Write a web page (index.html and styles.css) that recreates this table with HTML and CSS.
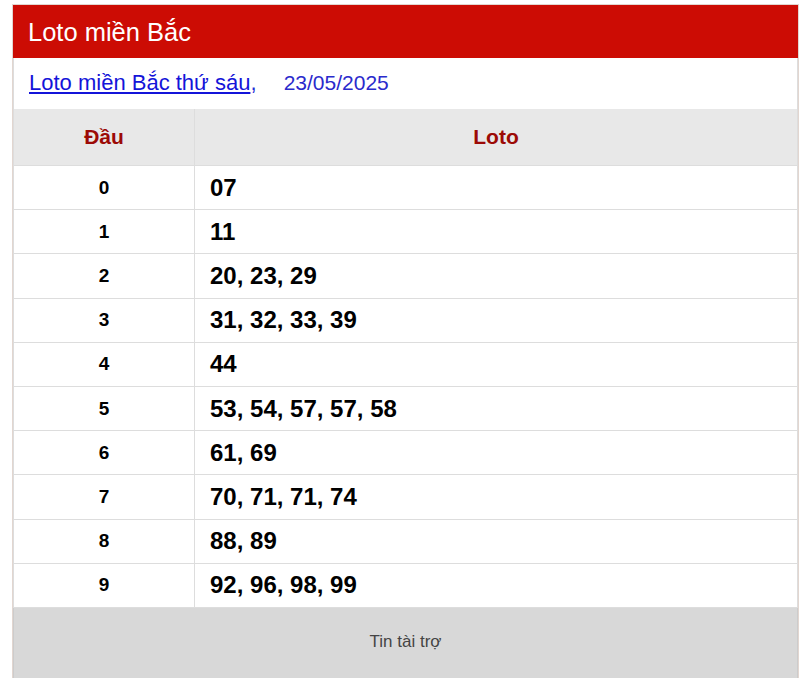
FILE: index.html
```html
<!DOCTYPE html>
<html lang="vi">
<head>
<meta charset="utf-8">
<link rel="stylesheet" href="styles.css">
</head>
<body>
<div class="box">
  <div class="title">Loto miền Bắc</div>
  <div class="sub"><a href="#" class="sub-link">Loto miền Bắc thứ sáu</a>, <span class="date">23/05/2025</span></div>
  <table class="loto">
    <thead>
      <tr><th class="c-dau">Đầu</th><th class="c-loto">Loto</th></tr>
    </thead>
    <tbody>
      <tr><td class="c-dau">0</td><td class="c-loto">07</td></tr>
      <tr><td class="c-dau">1</td><td class="c-loto">11</td></tr>
      <tr><td class="c-dau">2</td><td class="c-loto">20, 23, 29</td></tr>
      <tr><td class="c-dau">3</td><td class="c-loto">31, 32, 33, 39</td></tr>
      <tr><td class="c-dau">4</td><td class="c-loto">44</td></tr>
      <tr><td class="c-dau">5</td><td class="c-loto">53, 54, 57, 57, 58</td></tr>
      <tr><td class="c-dau">6</td><td class="c-loto">61, 69</td></tr>
      <tr><td class="c-dau">7</td><td class="c-loto">70, 71, 71, 74</td></tr>
      <tr><td class="c-dau">8</td><td class="c-loto">88, 89</td></tr>
      <tr><td class="c-dau">9</td><td class="c-loto">92, 96, 98, 99</td></tr>
    </tbody>
  </table>
  <div class="ad">Tin tài trợ</div>
</div>
</body>
</html>
```

FILE: styles.css
```css
html, body {
  margin: 0;
  padding: 0;
  background: #fff;
}
body {
  padding: 4px 1px 0 12px;
  font-family: "Liberation Sans", Arial, sans-serif;
}
.box {
  border: 1px solid #e2d6d0;
  border-bottom: none;
  width: 785px;
}
.title {
  background: #cc0c04;
  color: #fff;
  font-size: 25.5px;
  height: 53px;
  line-height: 54px;
  padding-left: 15px;
}
.sub {
  height: 51px;
  line-height: 50px;
  padding-left: 15px;
  font-size: 22px;
  color: #1f2fd6;
  border-left: 1px solid #ddd;
  border-right: 1px solid #ddd;
}
.sub-link {
  color: #1414d9;
  text-decoration: underline;
}
.date {
  margin-left: 21px;
  font-size: 21px;
  color: #2a2acc;
}
.loto {
  width: 100%;
  border-collapse: collapse;
  border-left: 1px solid #ddd;
  border-right: 1px solid #ddd;
}
.loto th {
  background: #e8e8e8;
  color: #9c0a06;
  font-size: 21px;
  font-weight: bold;
  height: 56px;
  padding: 0;
  border: 1px solid #ddd;
  border-top: none;
}
.loto tbody tr {
  height: 44.2px;
}
.loto td {
  padding: 0;
  border: 1px solid #ddd;
  vertical-align: middle;
}
.loto td.c-dau {
  width: 180px;
  text-align: center;
  font-size: 19px;
  font-weight: bold;
  color: #000;
}
.loto td.c-loto {
  padding-left: 15px;
  font-size: 24px;
  font-weight: bold;
  color: #000;
}
.loto th.c-dau {
  width: 180px;
}
.ad {
  background: #d8d8d8;
  height: 100px;
  text-align: center;
  padding-top: 24px;
  box-sizing: border-box;
  font-size: 17px;
  color: #444;
  border-left: 1px solid #ccc;
  border-right: 1px solid #ccc;
}
```
